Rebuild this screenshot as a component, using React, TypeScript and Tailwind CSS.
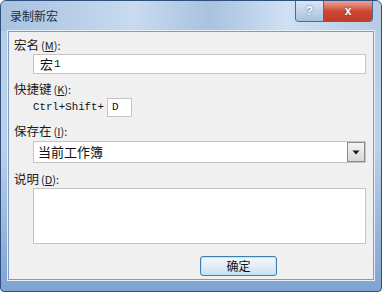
import React from 'react';

const cjk = { fontFamily: '"Noto Sans CJK SC", "Liberation Sans", sans-serif' };
const mono = { fontFamily: '"Liberation Mono", "Noto Sans CJK SC", monospace' };

function Label({ text, hot }: { text: string; hot: string }) {
  return (
    <div className="h-[16px] flex items-center text-[12.5px] text-[#1a1a1a] leading-none" style={cjk}>
      <span>{text}</span>
      <span className="ml-[2px] text-[11px]">(<span className="underline">{hot}</span>):</span>
    </div>
  );
}

export default function App() {
  return (
    <div className="w-[382px] h-[292px] bg-white overflow-hidden">
      {/* window frame */}
      <div className="w-full h-full rounded-t-[6px] rounded-b-[4px] border border-[#2f4f7c] bg-gradient-to-b from-[#b7cde6] via-[#bcd0ea] to-[#7fa3d2] flex flex-col">
        {/* title bar */}
        <div className="h-[30px] flex items-start justify-between pl-[9px] pr-[8px] bg-[linear-gradient(90deg,#a8c2e0_0%,#c8daef_35%,#a9c2df_55%,#cfe0f3_75%,#b4cbe6_100%)] rounded-t-[6px]">
          <div className="pt-[6px] text-[12px] text-[#1e2a3a]" style={cjk}>录制新宏</div>
          <div className="flex border border-t-0 border-[#4a6a94] rounded-b-[4px] overflow-hidden">
            <div className="w-[28px] h-[20px] flex items-center justify-center bg-gradient-to-b from-[#d9e6f4] to-[#a9c0dc] border-r border-[#4a6a94] text-[12px] font-bold text-white [text-shadow:0_0_2px_#3a5a80]" style={{ fontFamily: '"Liberation Sans", sans-serif' }}>?</div>
            <div className="w-[48px] h-[20px] flex items-center justify-center bg-gradient-to-b from-[#e8a397] via-[#cf4a35] to-[#c03a28] text-[12px] font-bold text-white [text-shadow:0_0_2px_#702010]" style={{ fontFamily: '"Liberation Sans", sans-serif' }}>x</div>
          </div>
        </div>
        {/* client area */}
        <div className="flex-1 mx-[7px] mb-[11px] bg-[#f0f0f0] border border-[#7f9cc4] shadow-[0_0_0_1px_#e6eef8] flex flex-col pl-[5px] pr-[7px] pt-[5px]">
          <Label text="宏名" hot="M" />
          <div className="ml-[19px] mt-[1px] h-[20px] bg-white border border-[#c4c4c4] flex items-center pl-[6px] text-[13px] text-[#111]" style={cjk}>
            宏<span className="text-[11px] ml-[1px]" style={mono}>1</span>
          </div>
          <div className="mt-[7px]">
            <Label text="快捷键" hot="K" />
          </div>
          <div className="ml-[19px] mt-[1px] flex items-center">
            <span className="text-[10.75px] text-[#111]" style={mono}>Ctrl+Shift+</span>
            <div className="ml-[3px] w-[25px] h-[19px] bg-white border border-[#c4c4c4] flex items-center pl-[4px] text-[11px] text-[#111]" style={mono}>D</div>
          </div>
          <div className="mt-[6px]">
            <Label text="保存在" hot="I" />
          </div>
          <div className="ml-[19px] mt-[2px] h-[22px] bg-white border border-[#c4c4c4] flex items-center justify-between">
            <span className="pl-[4px] text-[13px] text-[#111]" style={cjk}>当前工作簿</span>
            <div className="w-[18px] h-[20px] border border-[#8a8a8a] bg-gradient-to-b from-[#f4f4f4] to-[#d8d8d8] flex items-center justify-center">
              <svg width="8" height="5" viewBox="0 0 8 5">
                <path d="M0.5 0.5 L7.5 0.5 L4 4.5 Z" fill="#1a1a1a" />
              </svg>
            </div>
          </div>
          <div className="mt-[8px]">
            <Label text="说明" hot="D" />
          </div>
          <div className="ml-[19px] mt-[1px] h-[56px] bg-white border border-[#c4c4c4]" />
          <div className="mt-[12px] flex justify-end pr-[89px]">
            <div className="w-[77px] h-[20px] rounded-[3px] border border-[#3c7fb1] bg-gradient-to-b from-[#f2f8fc] via-[#e3eef7] to-[#c9dff0] shadow-[inset_0_0_0_1px_#bfe3f6] flex items-center justify-center text-[12px] text-[#111]" style={cjk}>
              确定
            </div>
          </div>
        </div>
      </div>
    </div>
  );
}
